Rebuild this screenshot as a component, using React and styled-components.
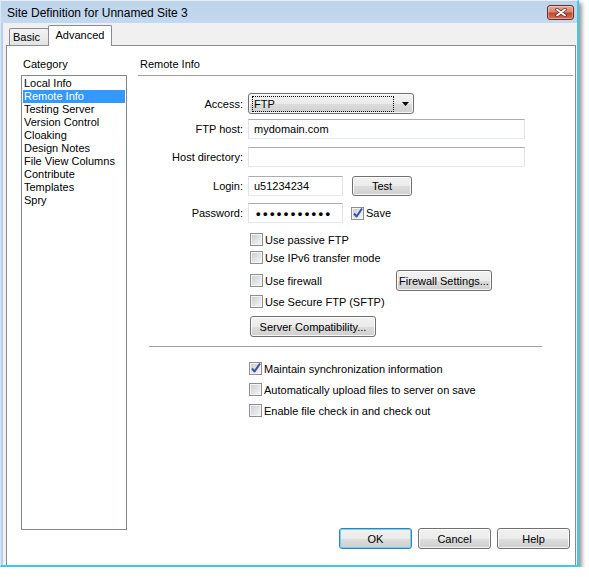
import React from 'react';
import styled, { createGlobalStyle } from 'styled-components';

const GlobalStyle = createGlobalStyle`
  html, body { margin: 0; padding: 0; background: #fff; }
  body {
    font-family: "Liberation Sans", Arial, sans-serif;
    font-size: 11px;
    color: #000;
  }
  * { box-sizing: border-box; }
`;

const Window = styled.div`
  width: 579px;
  height: 567px;
  display: flex;
  flex-direction: column;
  background: #f0f0f0;
  border-left: 1px solid #dce6f1;
  border-top: 1px solid #e6eef7;
  border-right: 2px solid #3fc7ec;
  border-bottom: 2px solid #3fc7ec;
  box-shadow: 3px 3px 4px rgba(0, 0, 0, 0.4);
`;

const TitleBar = styled.div`
  height: 22px;
  flex-shrink: 0;
  display: flex;
  align-items: flex-start;
  padding: 4px 3px 0 6px;
  background: linear-gradient(to bottom, #bcd3ea, #c4d9ef);
`;

const Title = styled.div`
  font-size: 12px;
  line-height: 14px;
  margin-top: 1px;
`;

const CloseButton = styled.div`
  margin-left: auto;
  width: 27px;
  height: 15px;
  border: 1px solid #6e2b22;
  border-radius: 3px;
  display: flex;
  align-items: center;
  justify-content: center;
  background: linear-gradient(to bottom, #e9aa9b 0%, #d9826f 45%, #c4452c 55%, #d0715a 100%);
  box-shadow: inset 0 0 0 1px rgba(255, 255, 255, 0.35);
`;

const Body = styled.div`
  flex: 1;
  display: flex;
  flex-direction: column;
  border-left: 2px solid #b6d0ec;
  padding: 0 1px 0 3px;
`;

const TabStrip = styled.div`
  height: 22px;
  flex-shrink: 0;
  display: flex;
  align-items: flex-end;
  padding-left: 3px;
`;

const Tab = styled.div`
  position: relative;
  border: 1px solid #898c95;
  border-bottom: none;
  border-radius: 2px 2px 0 0;
  line-height: 13px;
  width: ${p => p.$w}px;
  height: ${p => (p.$active ? 21 : 17)}px;
  padding-top: ${p => (p.$active ? 3 : 2)}px;
  padding-left: ${p => (p.$active ? 0 : 3)}px;
  text-align: ${p => (p.$active ? 'center' : 'left')};
  margin-left: ${p => (p.$active ? -1 : 0)}px;
  margin-bottom: ${p => (p.$active ? -1 : 0)}px;
  z-index: ${p => (p.$active ? 1 : 0)};
  background: ${p => (p.$active ? '#fff' : 'linear-gradient(to bottom, #f3f3f3, #e3e3e3)')};
`;

const Panel = styled.div`
  flex: 1;
  display: flex;
  background: #fff;
  border: 1px solid #898c95;
  border-bottom: none;
  padding: 12px 2px 16px 14px;
`;

const CategoryCol = styled.div`
  width: 106px;
  flex-shrink: 0;
  display: flex;
  flex-direction: column;
`;

const SectionLabel = styled.div`
  line-height: 13px;
  padding-left: ${p => p.$indent || 0}px;
`;

const CategoryList = styled.div`
  margin-top: 4px;
  height: 455px;
  border: 1px solid #828790;
  padding: 1px 1px;
`;

const CategoryItem = styled.div`
  height: 13px;
  line-height: 13px;
  padding-left: 1px;
  white-space: nowrap;
  background: ${p => (p.$selected ? '#3399ff' : 'transparent')};
  color: ${p => (p.$selected ? '#fff' : '#000')};
`;

const MainCol = styled.div`
  flex: 1;
  margin-left: 11px;
  display: flex;
  flex-direction: column;
`;

const Header = styled.div`
  line-height: 13px;
  padding: 0 0 4px 2px;
  border-bottom: 1px solid #a0a0a0;
`;

const FieldRow = styled.div`
  display: flex;
  align-items: center;
  margin-top: ${p => p.$mt}px;
`;

const FieldLabel = styled.div`
  width: 106px;
  text-align: right;
  padding-right: 1px;
  margin-right: 4px;
  flex-shrink: 0;
`;

const TextBox = styled.div`
  width: ${p => p.$w}px;
  height: 20px;
  border: 1px solid #e2e3ea;
  border-top-color: #abadb3;
  border-bottom-color: #e3e9ef;
  padding-left: 5px;
  display: flex;
  align-items: center;
  background: #fff;
  white-space: nowrap;
`;

const Dots = styled.span`
  font-size: 13px;
  font-weight: bold;
  letter-spacing: 2.4px;
  padding-left: 2px;
`;

const Button = styled.div`
  width: ${p => p.$w}px;
  height: ${p => p.$h || 21}px;
  flex-shrink: 0;
  border: 1px solid ${p => (p.$default ? '#3c7fb1' : '#707070')};
  border-radius: 3px;
  display: flex;
  align-items: center;
  justify-content: center;
  white-space: nowrap;
  margin-left: ${p => p.$ml || 0}px;
  background: linear-gradient(to bottom, #f2f2f2 0%, #ebebeb 50%, #dddddd 51%, #cfcfcf 100%);
  box-shadow: inset 0 0 0 1px ${p => (p.$default ? '#6fd3f7' : 'rgba(255,255,255,0.8)')};
`;

const Select = styled.div`
  width: 166px;
  height: 21px;
  border: 1px solid #707070;
  border-radius: 3px;
  display: flex;
  align-items: center;
  padding-left: 3px;
  background: linear-gradient(to bottom, #f2f2f2 0%, #ebebeb 50%, #dddddd 51%, #cfcfcf 100%);
  box-shadow: inset 0 0 0 1px rgba(255, 255, 255, 0.8);
`;

const FocusRect = styled.div`
  width: 142px;
  height: 16px;
  border: 1px dotted #000;
  line-height: 14px;
  padding-left: 1px;
`;

const Arrow = styled.svg`
  margin-left: 8px;
`;

const CheckRow = styled.div`
  display: flex;
  align-items: center;
  height: ${p => p.$h || 13}px;
  margin-top: ${p => p.$mt || 0}px;
  padding-left: ${p => p.$pl || 0}px;
`;

const CheckLabel = styled.div`
  display: flex;
  align-items: center;
  width: ${p => (p.$w ? `${p.$w}px` : 'auto')};
  margin-left: ${p => p.$ml || 0}px;
  flex-shrink: 0;
`;

const Box = styled.div`
  width: 13px;
  height: 13px;
  flex-shrink: 0;
  border: 1px solid #8e8f8f;
  padding: 1px;
  background: #f4f4f4;
  margin-right: 2px;
`;

const BoxInner = styled.div`
  width: 9px;
  height: 9px;
  background: linear-gradient(135deg, #cbcfd5 0%, #e4e5e8 60%, #f3f3f3 100%);
  position: relative;
`;

const Tick = styled.svg`
  position: absolute;
  left: -1px;
  top: -2px;
`;

const Separator = styled.div`
  height: 1px;
  background: #a0a0a0;
  margin: ${p => p.$mt}px 31px 0 11px;
`;

const Footer = styled.div`
  margin-top: auto;
  display: flex;
  justify-content: flex-end;
  gap: 6px;
  padding-right: 3px;
`;

const categories = [
  'Local Info',
  'Remote Info',
  'Testing Server',
  'Version Control',
  'Cloaking',
  'Design Notes',
  'File View Columns',
  'Contribute',
  'Templates',
  'Spry',
];

function Checkbox({ checked }) {
  return (
    <Box>
      <BoxInner>
        {checked && (
          <Tick width="12" height="12" viewBox="0 0 12 12">
            <path d="M2 6.5 L4.6 9.5 L10 1.5" fill="none" stroke="#3b52a0" strokeWidth="2" strokeLinejoin="round" />
          </Tick>
        )}
      </BoxInner>
    </Box>
  );
}

function Check({ label, checked, ...rest }) {
  return (
    <CheckLabel {...rest}>
      <Checkbox checked={checked} />
      <span>{label}</span>
    </CheckLabel>
  );
}

export default function App() {
  return (
    <>
      <GlobalStyle />
      <Window>
        <TitleBar>
          <Title>Site Definition for Unnamed Site 3</Title>
          <CloseButton>
            <svg width="12" height="9" viewBox="0 0 12 9">
              <path d="M2 1.5 L10 7.5 M10 1.5 L2 7.5" stroke="#5a1f18" strokeWidth="3.4" strokeLinecap="round" />
              <path d="M2 1.5 L10 7.5 M10 1.5 L2 7.5" stroke="#fff" strokeWidth="2" strokeLinecap="round" />
            </svg>
          </CloseButton>
        </TitleBar>
        <Body>
          <TabStrip>
            <Tab $w={40}>Basic</Tab>
            <Tab $w={64} $active>Advanced</Tab>
          </TabStrip>
          <Panel>
            <CategoryCol>
              <SectionLabel $indent={2}>Category</SectionLabel>
              <CategoryList>
                {categories.map(c => (
                  <CategoryItem key={c} $selected={c === 'Remote Info'}>{c}</CategoryItem>
                ))}
              </CategoryList>
            </CategoryCol>
            <MainCol>
              <Header>Remote Info</Header>

              <FieldRow $mt={17}>
                <FieldLabel>Access:</FieldLabel>
                <Select>
                  <FocusRect>FTP</FocusRect>
                  <Arrow width="7" height="4" viewBox="0 0 7 4">
                    <polygon points="0,0 7,0 3.5,4" fill="#000" />
                  </Arrow>
                </Select>
              </FieldRow>
              <FieldRow $mt={5}>
                <FieldLabel>FTP host:</FieldLabel>
                <TextBox $w={277}>mydomain.com</TextBox>
              </FieldRow>
              <FieldRow $mt={8}>
                <FieldLabel>Host directory:</FieldLabel>
                <TextBox $w={277} />
              </FieldRow>
              <FieldRow $mt={9}>
                <FieldLabel>Login:</FieldLabel>
                <TextBox $w={95}>u51234234</TextBox>
                <Button $w={60} $h={20} $ml={9}>Test</Button>
              </FieldRow>
              <FieldRow $mt={7}>
                <FieldLabel>Password:</FieldLabel>
                <TextBox $w={95}><Dots>•••••••••••</Dots></TextBox>
                <Check label="Save" checked $ml={8} />
              </FieldRow>

              <CheckRow $mt={10} $pl={112}>
                <Check label="Use passive FTP" />
              </CheckRow>
              <CheckRow $mt={5} $pl={112}>
                <Check label="Use IPv6 transfer mode" />
              </CheckRow>
              <CheckRow $mt={6} $pl={112} $h={21}>
                <Check label="Use firewall" $w={146} />
                <Button $w={96}>Firewall Settings...</Button>
              </CheckRow>
              <CheckRow $mt={4} $pl={112}>
                <Check label="Use Secure FTP (SFTP)" />
              </CheckRow>
              <CheckRow $mt={8} $pl={112} $h={21}>
                <Button $w={126}>Server Compatibility...</Button>
              </CheckRow>

              <Separator $mt={9} />

              <CheckRow $mt={15} $pl={111}>
                <Check label="Maintain synchronization information" checked />
              </CheckRow>
              <CheckRow $mt={8} $pl={111}>
                <Check label="Automatically upload files to server on save" />
              </CheckRow>
              <CheckRow $mt={8} $pl={111}>
                <Check label="Enable file check in and check out" />
              </CheckRow>

              <Footer>
                <Button $w={73} $default>OK</Button>
                <Button $w={73}>Cancel</Button>
                <Button $w={73}>Help</Button>
              </Footer>
            </MainCol>
          </Panel>
        </Body>
      </Window>
    </>
  );
}
